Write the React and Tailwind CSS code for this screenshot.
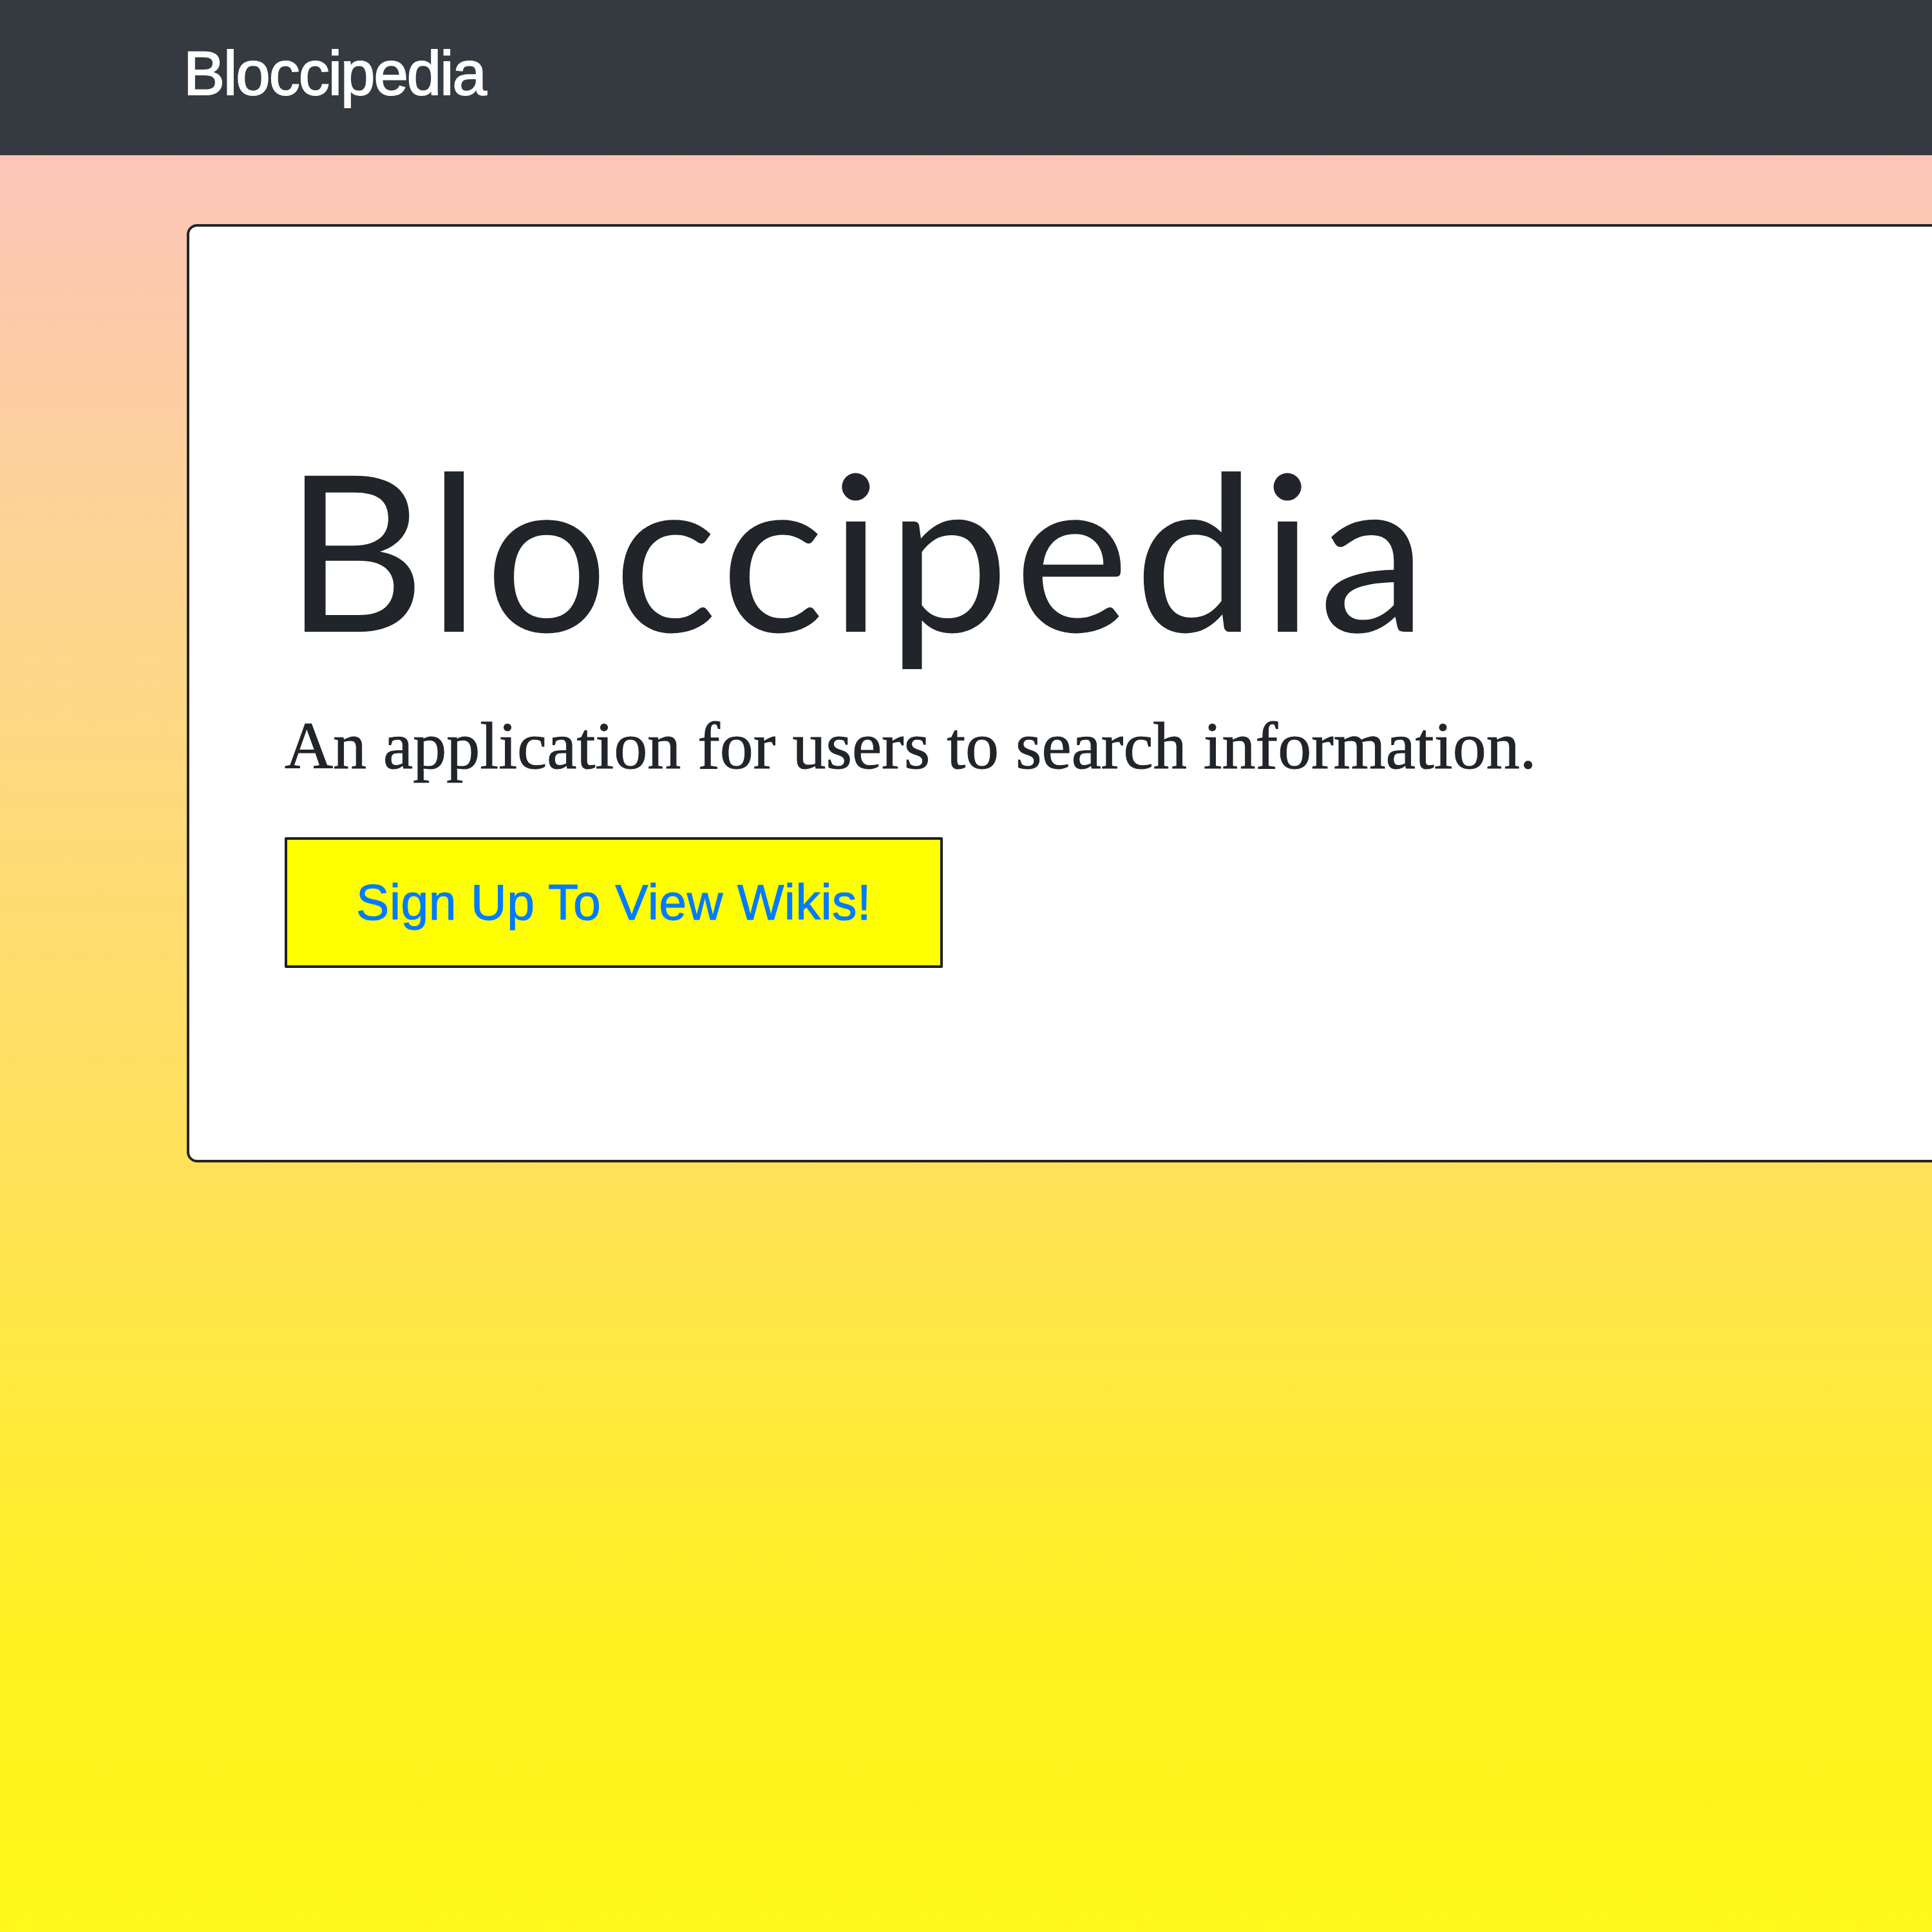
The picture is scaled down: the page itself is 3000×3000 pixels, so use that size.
import React from 'react';

export default function App() {
  return (
    <div className="flex h-[3000px] w-[3000px] flex-col overflow-hidden">
      {/* navbar */}
      <nav className="h-[241px] shrink-0 bg-[#343a40] pl-[285px] pt-[66px]">
        <a className="block font-['Liberation_Sans',Arial,sans-serif] text-[96px] leading-none tracking-[-2px] text-white [-webkit-text-stroke:2px_#fff]">
          Bloccipedia
        </a>
      </nav>

      {/* hero */}
      <main className="flex-1 overflow-hidden bg-[linear-gradient(to_bottom,#fcc5b9_0%,#fdcaa9_9%,#fed690_25%,#ffe15a_56%,#fff21f_85%,#fff81a_100%)] pl-[290px] pt-[107px]">
        <div className="h-[1457px] w-[2800px] rounded-[16px] border-[4px] border-[#212529] bg-white pl-[148px] pt-[329px]">
          <h1 className="font-['Lato','Open_Sans',sans-serif] text-[338px] font-normal leading-none tracking-[8px] text-[#212529]">
            Bloccipedia
          </h1>
          <p className="mt-[87px] font-['Liberation_Serif','Times_New_Roman',serif] text-[104px] leading-none text-[#212529] [-webkit-text-stroke:1px_#212529]">
            An application for users to search information.
          </p>
          <button className="mt-[90px] flex h-[203px] w-[1022px] items-center justify-center rounded-[2px] border-[4px] border-[#1e1e1e] bg-[#ffff00] font-['Liberation_Sans',Arial,sans-serif] text-[77px] leading-none tracking-[0.5px] text-[#007bff] [-webkit-text-stroke:1px_#007bff]">
            Sign Up To View Wikis!
          </button>
        </div>
      </main>
    </div>
  );
}
